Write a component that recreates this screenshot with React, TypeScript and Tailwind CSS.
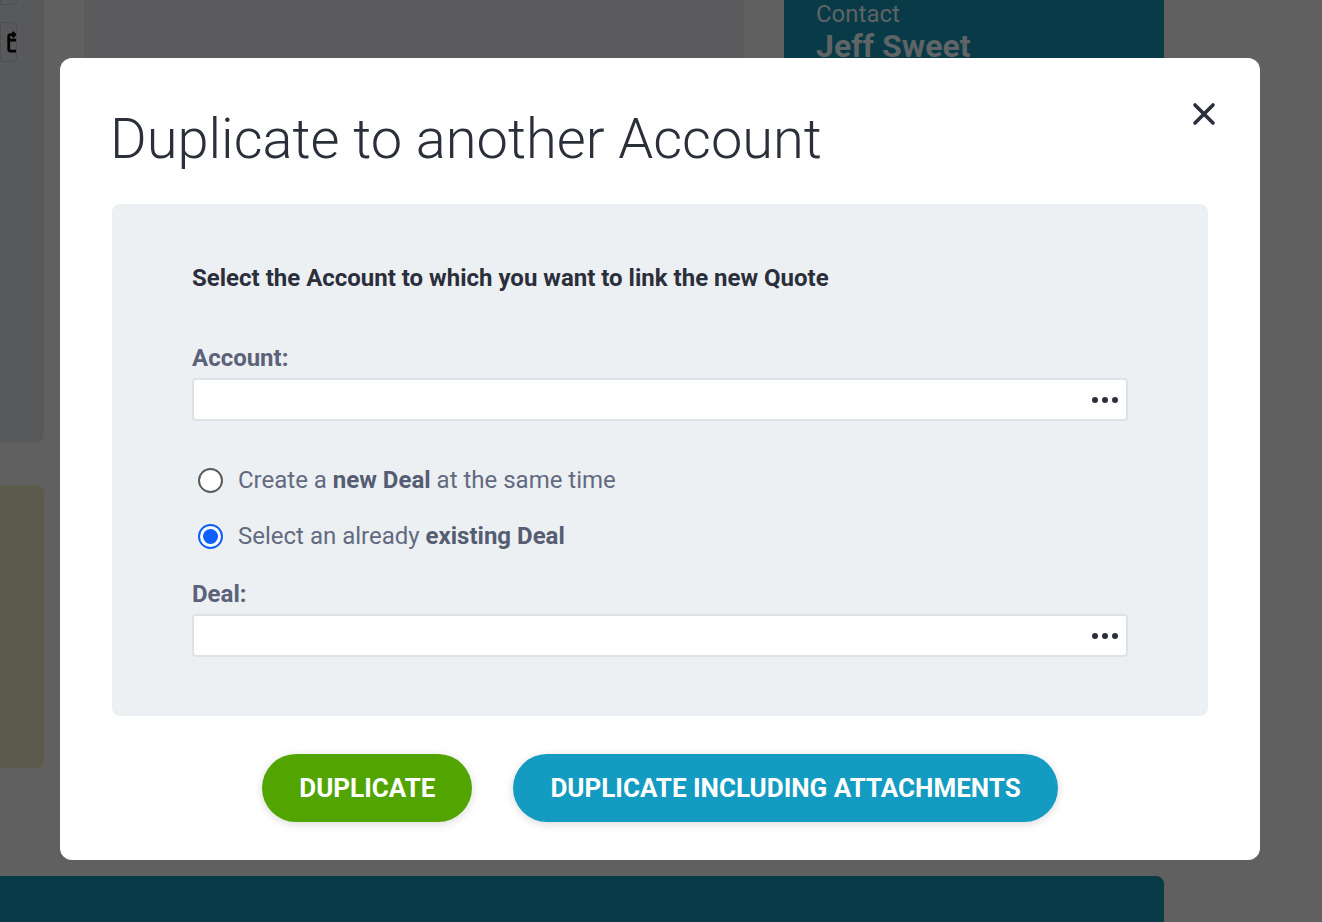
import { Calendar, X } from 'lucide-react';

function Dots() {
  return (
    <div className="flex items-center gap-[4px] pr-[8px]">
      <span className="h-[6px] w-[6px] rounded-full bg-[#2b2f3b]" />
      <span className="h-[6px] w-[6px] rounded-full bg-[#2b2f3b]" />
      <span className="h-[6px] w-[6px] rounded-full bg-[#2b2f3b]" />
    </div>
  );
}

function LookupInput() {
  return (
    <div className="flex h-[43px] w-full items-center justify-end rounded-[4px] border-2 border-[#dfe1e4] bg-white">
      <Dots />
    </div>
  );
}

function Radio({ checked }: { checked?: boolean }) {
  return checked ? (
    <span className="flex h-[25px] w-[25px] items-center justify-center rounded-full border-[2px] border-[#0d5fff] bg-white">
      <span className="h-[15px] w-[15px] rounded-full bg-[#0d5fff]" />
    </span>
  ) : (
    <span className="h-[25px] w-[25px] rounded-full border-[2px] border-[#5b5b5b] bg-white" />
  );
}

function Background() {
  return (
    <div className="flex h-[922px] w-[1322px] flex-col bg-[#606060]">
      <div className="flex h-[876px] gap-[40px]">
        {/* Left rail */}
        <div className="flex w-[44px] shrink-0 flex-col">
          <div className="flex h-[443px] flex-col gap-[17px] rounded-br-lg bg-[#58595b]">
            <div className="-mt-[6px] h-[11px] w-[17px] rounded-br-[4px] border border-[#4f4f51]" />
            <div className="flex h-[40px] w-[17px] items-center justify-end overflow-hidden rounded-r-[4px] border border-[#4f4f51]">
              <Calendar className="-mr-[12px] h-[26px] w-[22px] shrink-0 text-black" strokeWidth={3} />
            </div>
          </div>
          <div className="mt-[42px] h-[283px] rounded-r-lg bg-[#5c5a4c]" />
        </div>

        {/* Main card */}
        <div className="h-[860px] w-[660px] shrink-0 bg-[#5b5b5d]" />

        {/* Contact card */}
        <div className="h-[300px] w-[380px] shrink-0 bg-[#093a47] px-[32px] font-['Roboto',sans-serif]">
          <div className="text-[24px] leading-[28px] text-[#5e6466]">Contact</div>
          <div className="text-[32px] font-bold leading-[36px] text-[#5f6466]">Jeff Sweet</div>
        </div>
      </div>
      <div className="h-[46px] w-[1164px] rounded-tr-lg bg-[#093a47]" />
    </div>
  );
}

export default function App() {
  return (
    <div className="relative h-[922px] w-[1322px] overflow-hidden font-['Roboto',sans-serif]">
      <Background />

      {/* Modal */}
      <div className="absolute left-[60px] top-[58px] flex h-[802px] w-[1200px] flex-col rounded-xl bg-white px-[52px] pt-[49px]">
        <button className="absolute right-[38px] top-[38px] text-[#2b2f3b]">
          <X className="h-[36px] w-[36px]" strokeWidth={2.4} />
        </button>

        <h1 className="-ml-[2px] text-[56px] font-light leading-[64px] text-[#2a2f3a]">Duplicate to another Account</h1>

        <div className="mt-[33px] flex h-[512px] flex-col rounded-lg bg-[#edf0f3] px-[80px] pt-[60px]">
          <p className="text-[24px] font-bold leading-[28px] text-[#2b2f3b]">
            Select the Account to which you want to link the new Quote
          </p>

          <label className="mt-[52px] text-[24px] font-bold leading-[28px] text-[#5b6279]">Account:</label>
          <div className="mt-[6px]">
            <LookupInput />
          </div>

          <div className="mt-[45px] flex flex-col gap-[28px] pl-[6px] text-[24px] leading-[28px] text-[#626a80]">
            <div className="flex items-center gap-[15px]">
              <Radio />
              <span>
                Create a <b className="font-bold text-[#555d72]">new Deal</b> at the same time
              </span>
            </div>
            <div className="flex items-center gap-[15px]">
              <Radio checked />
              <span>
                Select an already <b className="font-bold text-[#555d72]">existing Deal</b>
              </span>
            </div>
          </div>

          <label className="mt-[30px] text-[24px] font-bold leading-[28px] text-[#5b6279]">Deal:</label>
          <div className="mt-[6px]">
            <LookupInput />
          </div>
        </div>

        <div className="mt-[38px] flex justify-center gap-[41px]">
          <button className="h-[68px] rounded-full bg-[#52a500] px-[37px] text-[26px] font-bold text-white shadow-[0_2px_10px_rgba(0,0,0,0.15)]">
            DUPLICATE
          </button>
          <button className="h-[68px] rounded-full bg-[#139bc1] px-[37px] text-[26px] font-bold text-white shadow-[0_2px_10px_rgba(0,0,0,0.15)]">
            DUPLICATE INCLUDING ATTACHMENTS
          </button>
        </div>
      </div>
    </div>
  );
}
